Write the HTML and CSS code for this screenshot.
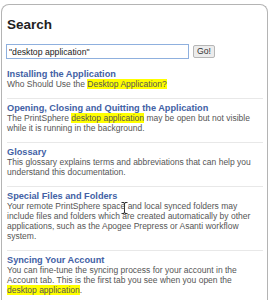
FILE: index.html
```html
<!DOCTYPE html>
<html>
<head>
<meta charset="utf-8">
<link rel="stylesheet" href="styles.css">
</head>
<body>
<div class="panel">
  <h1 class="title">Search</h1>
  <form class="search">
    <input class="field" type="text" value="&quot;desktop application&quot;">
    <button class="go" type="button">Go!</button>
  </form>
  <ul class="results">
    <li class="result">
      <a class="rtitle" href="#">Installing the Application</a>
      <p class="rtext">Who Should Use the <mark>Desktop Application?</mark></p>
    </li>
    <li class="result">
      <a class="rtitle" href="#">Opening, Closing and Quitting the Application</a>
      <p class="rtext">The PrintSphere <mark>desktop application</mark> may be open but not visible while it is running in the background.</p>
    </li>
    <li class="result">
      <a class="rtitle" href="#">Glossary</a>
      <p class="rtext">This glossary explains terms and abbreviations that can help you understand this documentation.</p>
    </li>
    <li class="result">
      <a class="rtitle" href="#">Special Files and Folders</a>
      <p class="rtext">Your remote PrintSphere space and local synced folders may include files and folders which are created automatically by other applications, such as the Apogee Prepress or Asanti workflow system.</p>
    </li>
    <li class="result">
      <a class="rtitle" href="#">Syncing Your Account</a>
      <p class="rtext">You can fine-tune the syncing process for your account in the Account tab. This is the first tab you see when you open the <mark>desktop application</mark>.</p>
    </li>
  </ul>
  <svg class="ibeam" width="7" height="12" viewBox="0 0 7 12"><path d="M0.5 0.5h2.5v1h1v-1h2.5M3.5 1.5v9M0.5 11.5h2.5v-1h1v1h2.5" fill="none" stroke="#333" stroke-width="1"/></svg>
</div>
</body>
</html>
```
FILE: styles.css
```css
html, body { margin: 0; padding: 0; background: #fff; }
body { font-family: "Liberation Sans", Arial, sans-serif; color: #555; }
.panel {
  position: relative;
  margin: 4px 4px 0 1px;
  border: 1px solid #b4b4b4;
  border-bottom: none;
  border-radius: 8px 8px 0 0;
  padding: 12px 4px 20px 4px;
  height: 300px;
  box-sizing: border-box;
}
.title { margin: 0 0 11px 1px; font-size: 13.5px; font-weight: bold; color: #222; line-height: 16px; }
.search { display: flex; align-items: center; gap: 4px; margin: 0 0 6px 0; }
.field {
  width: 183px; height: 15px; box-sizing: border-box; margin: 0;
  border: 1px solid #8fb0de; padding: 0 2px;
  font-family: inherit; font-size: 8.7px; color: #222; outline: none;
}
.go {
  height: 13px; box-sizing: border-box; margin: 0; padding: 0 3px;
  border: 1px solid #b6b6b6; border-radius: 2px; background: #ececec;
  font-family: inherit; font-size: 8.7px; color: #333; line-height: 11px;
}
.results { list-style: none; margin: 0 0 0 1px; padding: 0; }
.result { border-bottom: 1px solid #e8e8e8; padding: 4px 0 9px; }
.rtitle { display: block; font-size: 9.2px; font-weight: bold; color: #4261a5; text-decoration: none; line-height: 10px; }
.rtext { margin: 0; font-size: 8.5px; line-height: 10px; color: #555; }
mark { background: #ffff00; color: #555; }
.ibeam { position: absolute; left: 119px; top: 197px; }
```
